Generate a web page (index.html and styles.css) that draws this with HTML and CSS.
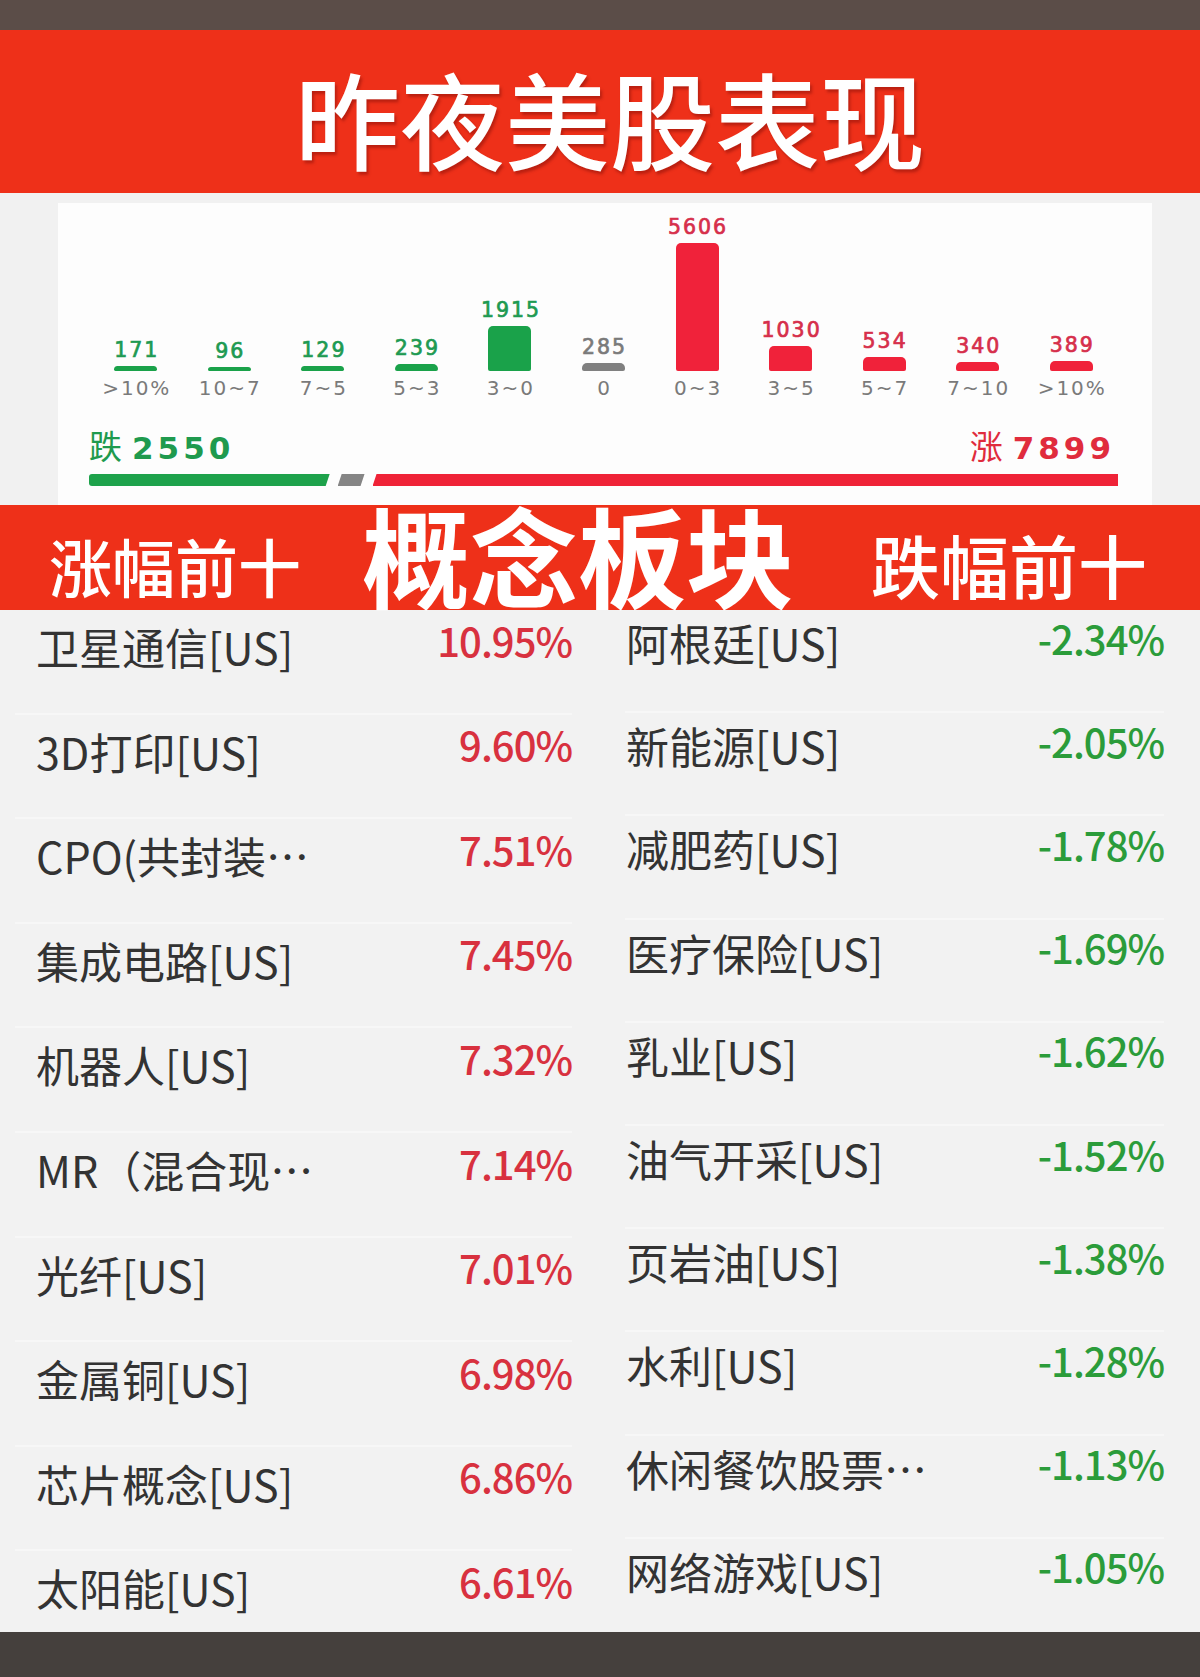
FILE: index.html
```html
<!DOCTYPE html>
<html lang="zh-CN">
<head>
<meta charset="utf-8">
<title>昨夜美股表现</title>
<link rel="stylesheet" href="styles.css">
</head>
<body>
<div class="topbar"></div>
<header class="hero"><h1>昨夜美股表现</h1></header>
<section class="chart-wrap">
  <div class="card">
    <div class="bars">
      <div class="col down"><span class="val">171</span><span class="bar" style="height:5px"></span><span class="lbl">&gt;10%</span></div>
      <div class="col down"><span class="val">96</span><span class="bar" style="height:4px"></span><span class="lbl">10~7</span></div>
      <div class="col down"><span class="val">129</span><span class="bar" style="height:5px"></span><span class="lbl">7~5</span></div>
      <div class="col down"><span class="val">239</span><span class="bar" style="height:7px"></span><span class="lbl">5~3</span></div>
      <div class="col down"><span class="val">1915</span><span class="bar" style="height:45px"></span><span class="lbl">3~0</span></div>
      <div class="col flat"><span class="val">285</span><span class="bar" style="height:8px"></span><span class="lbl">0</span></div>
      <div class="col up"><span class="val">5606</span><span class="bar" style="height:128px"></span><span class="lbl">0~3</span></div>
      <div class="col up"><span class="val">1030</span><span class="bar" style="height:25px"></span><span class="lbl">3~5</span></div>
      <div class="col up"><span class="val">534</span><span class="bar" style="height:14px"></span><span class="lbl">5~7</span></div>
      <div class="col up"><span class="val">340</span><span class="bar" style="height:9px"></span><span class="lbl">7~10</span></div>
      <div class="col up"><span class="val">389</span><span class="bar" style="height:10px"></span><span class="lbl">&gt;10%</span></div>
    </div>
    <div class="totals">
      <span class="t-down"><span class="t-cn">跌</span><span class="t-num">2550</span></span>
      <span class="t-up"><span class="t-cn">涨</span><span class="t-num">7899</span></span>
    </div>
    <div class="ratio">
      <span class="seg g" style="flex:2550"></span>
      <span class="seg n" style="flex:285"></span>
      <span class="seg r" style="flex:7899"></span>
    </div>
  </div>
</section>
<div class="band2">
  <span class="b-side left">涨幅前十</span>
  <span class="b-main">概念板块</span>
  <span class="b-side right">跌幅前十</span>
</div>
<section class="table">
  <div class="tcol left">
    <div class="row"><span class="name">卫星通信[US]</span><span class="pct">10.95%</span></div>
    <div class="row"><span class="name">3D打印[US]</span><span class="pct">9.60%</span></div>
    <div class="row"><span class="name">CPO(共封装…</span><span class="pct">7.51%</span></div>
    <div class="row"><span class="name">集成电路[US]</span><span class="pct">7.45%</span></div>
    <div class="row"><span class="name">机器人[US]</span><span class="pct">7.32%</span></div>
    <div class="row"><span class="name">MR（混合现…</span><span class="pct">7.14%</span></div>
    <div class="row"><span class="name">光纤[US]</span><span class="pct">7.01%</span></div>
    <div class="row"><span class="name">金属铜[US]</span><span class="pct">6.98%</span></div>
    <div class="row"><span class="name">芯片概念[US]</span><span class="pct">6.86%</span></div>
    <div class="row"><span class="name">太阳能[US]</span><span class="pct">6.61%</span></div>
  </div>
  <div class="tcol right">
    <div class="row"><span class="name">阿根廷[US]</span><span class="pct">-2.34%</span></div>
    <div class="row"><span class="name">新能源[US]</span><span class="pct">-2.05%</span></div>
    <div class="row"><span class="name">减肥药[US]</span><span class="pct">-1.78%</span></div>
    <div class="row"><span class="name">医疗保险[US]</span><span class="pct">-1.69%</span></div>
    <div class="row"><span class="name">乳业[US]</span><span class="pct">-1.62%</span></div>
    <div class="row"><span class="name">油气开采[US]</span><span class="pct">-1.52%</span></div>
    <div class="row"><span class="name">页岩油[US]</span><span class="pct">-1.38%</span></div>
    <div class="row"><span class="name">水利[US]</span><span class="pct">-1.28%</span></div>
    <div class="row"><span class="name">休闲餐饮股票…</span><span class="pct">-1.13%</span></div>
    <div class="row"><span class="name">网络游戏[US]</span><span class="pct">-1.05%</span></div>
  </div>
</section>
<div class="bottombar"></div>
</body>
</html>
```

FILE: styles.css
```css
* { box-sizing: border-box; margin: 0; padding: 0; }
html, body { width: 1200px; height: 1677px; }
body {
  margin: 0;
  background: #f2f2f2;
  font-family: "Noto Sans CJK SC", "Noto Sans", sans-serif;
  overflow: hidden;
}

.topbar { height: 30px; background: #5b4d48; }

.hero {
  height: 163px;
  background: #ee3019;
  padding: 34px 0 0 20px;
  text-align: center;
}
.hero h1 {
  font-size: 105px;
  line-height: 1;
  font-weight: 500;
  color: #fff;
  text-shadow: 2px 3px 3px rgba(90, 0, 0, 0.35);
}

.chart-wrap {
  height: 312px;
  padding: 10px 48px 0 58px;
  background: #f1f1f1;
}
.card {
  height: 302px;
  background: #fdfdfd;
  padding: 0 34px 0 31px;
}
.bars {
  display: flex;
  height: 197px;
  align-items: flex-end;
}
.col {
  flex: 1;
  display: flex;
  flex-direction: column;
  align-items: center;
}
.val {
  font-family: "DejaVu Sans", sans-serif;
  font-size: 20.5px;
  font-weight: 400;
  line-height: 24px;
  letter-spacing: 2px;
  padding-left: 2px;
  margin-bottom: 4px;
  -webkit-text-stroke: 0.7px currentColor;
}
.bar {
  display: block;
  width: 43px;
  border-radius: 5px 5px 2px 2px;
}
.lbl {
  font-family: "DejaVu Sans", sans-serif;
  font-size: 20px;
  line-height: 24px;
  color: #7a7a7a;
  letter-spacing: 2px;
  padding-left: 2px;
  margin-top: 5px;
}
.down .val { color: #1e9a52; }
.down .bar { background: #1aa24a; }
.flat .val { color: #7a7a7a; }
.flat .bar { background: #808080; }
.up .val { color: #d62f4b; }
.up .bar { background: #f0223a; }

.totals {
  display: flex;
  justify-content: space-between;
  align-items: baseline;
  margin-top: 27px;
  height: 36px;
  line-height: 36px;
}
.t-cn {
  font-family: "Noto Sans CJK SC", sans-serif;
  font-size: 33px;
  font-weight: 400;
  margin-right: 10px;
}
.t-num {
  font-family: "DejaVu Sans", sans-serif;
  font-size: 31px;
  font-weight: 700;
  letter-spacing: 4px;
}
.t-down { color: #1f9a4e; }
.t-up { color: #e02c3d; padding-right: 3px; }

.ratio {
  display: flex;
  gap: 8px;
  height: 12px;
  margin-top: 11px;
}
.seg { display: block; height: 12px; }
.seg.g {
  background: #1da24b;
  border-radius: 3px 0 0 3px;
  clip-path: polygon(0 0, 100% 0, calc(100% - 4px) 100%, 0 100%);
}
.seg.n {
  background: #858585;
  clip-path: polygon(4px 0, 100% 0, calc(100% - 4px) 100%, 0 100%);
}
.seg.r {
  background: #ef2337;
  clip-path: polygon(4px 0, 100% 0, 100% 100%, 0 100%);
}

.band2 {
  height: 105px;
  background: #ee3019;
  display: flex;
  align-items: flex-start;
  padding-left: 49px;
  color: #fff;
  white-space: nowrap;
}
.b-side {
  font-size: 63px;
  line-height: 1;
  font-weight: 500;
  margin-top: 28px;
}
.b-main {
  font-size: 108px;
  line-height: 100px;
  font-weight: 700;
  margin-top: -2px;
  margin-left: 61px;
}
.b-side.right {
  font-size: 69px;
  margin-top: 25px;
  margin-left: 77px;
}

.table {
  display: flex;
  height: 1022px;
  overflow: hidden;
  background: #f2f2f2;
}
.tcol.left { width: 590px; padding: 0 18px 0 15px; }
.tcol.right { flex: 1; padding: 0 36px 0 35px; }
.row {
  display: flex;
  justify-content: space-between;
  align-items: flex-start;
  border-bottom: 2px solid #f7f7f7;
}
.left .row { height: 104.6px; padding-left: 21px; }
.right .row { height: 103.2px; padding-left: 1px; }
.name {
  font-size: 43px;
  line-height: 1;
  color: #333;
  white-space: nowrap;
}
.left .name { margin-top: 15px; }
.right .name { margin-top: 11px; }
.pct {
  font-size: 40px;
  line-height: 1;
  font-weight: 500;
  letter-spacing: -1px;
}
.left .pct { margin-top: 9.6px; color: #d8313f; }
.right .pct { margin-top: 7.6px; color: #2b9c3a; }

.bottombar { height: 45px; background: #45403d; }
```
